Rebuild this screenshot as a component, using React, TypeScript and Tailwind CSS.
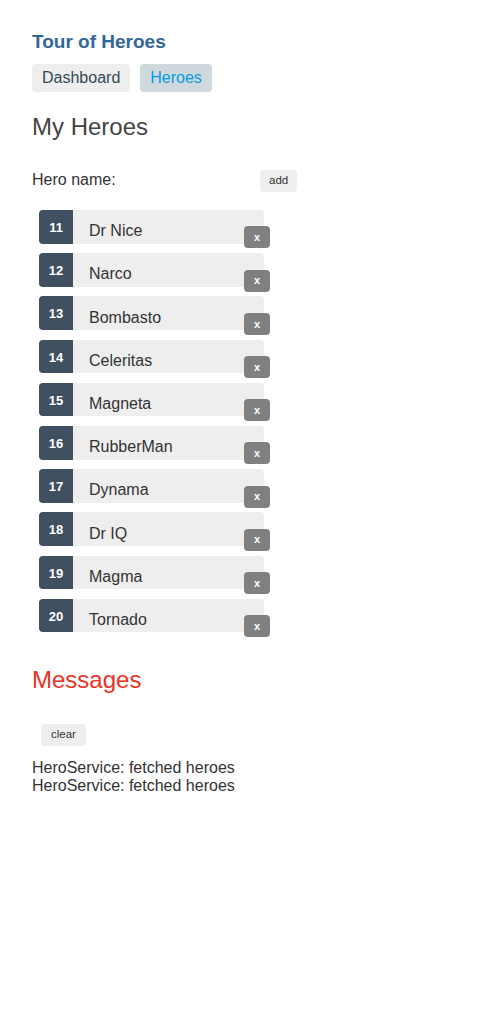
import React from 'react';

interface Hero {
  id: number;
  name: string;
}

const heroes: Hero[] = [
  { id: 11, name: 'Dr Nice' },
  { id: 12, name: 'Narco' },
  { id: 13, name: 'Bombasto' },
  { id: 14, name: 'Celeritas' },
  { id: 15, name: 'Magneta' },
  { id: 16, name: 'RubberMan' },
  { id: 17, name: 'Dynama' },
  { id: 18, name: 'Dr IQ' },
  { id: 19, name: 'Magma' },
  { id: 20, name: 'Tornado' },
];

const messages = ['HeroService: fetched heroes', 'HeroService: fetched heroes'];

const App: React.FC = () => {
  return (
    <div className="min-h-[1024px] bg-white px-[32px] pt-[31px] text-[#333] font-['Liberation_Sans',Arial,sans-serif]">
      <h1 className="text-[19px] leading-[22px] font-bold text-[#369]">Tour of Heroes</h1>

      {/* Nav */}
      <nav className="mt-[11px] flex gap-[10px]">
        <a className="rounded-[4px] bg-[#eee] px-[10px] py-[5px] text-[16px] leading-[18px] text-[#334953]">
          Dashboard
        </a>
        <a className="rounded-[4px] bg-[#cfd8dc] px-[10px] py-[5px] text-[16px] leading-[18px] text-[#039be5]">
          Heroes
        </a>
      </nav>

      <h2 className="mt-[21px] text-[24px] leading-[28px] text-[#444]">My Heroes</h2>

      {/* Add hero */}
      <div className="mt-[28px] flex items-start">
        <label className="mt-[2px] w-[88px] text-[16px] leading-[18px]">Hero name:</label>
        <input className="h-[18px] w-[140px] bg-transparent outline-none" />
        <button className="mt-[0.5px] h-[22px] rounded-[4px] bg-[#eee] px-[9px] text-[11.5px] text-[#333]">
          add
        </button>
      </div>

      {/* Hero list */}
      <ul className="ml-[7px] mt-[18.5px] flex flex-col gap-[9.6px]">
        {heroes.map((hero) => (
          <li key={hero.id} className="relative flex h-[33.6px] w-[225px] items-center rounded-[4px] bg-[#eee]">
            <span className="flex h-full w-[34px] items-center justify-center rounded-l-[4px] bg-[#405061] pt-[2px] text-[13px] font-bold text-white">
              {hero.id}
            </span>
            <span className="mt-[9px] pl-[16px] text-[16px] leading-[18px] text-[#333]">{hero.name}</span>
            <button className="absolute left-[205px] top-[16.4px] flex h-[22px] w-[26px] items-center justify-center rounded-[4px] bg-[#808080] text-[11px] font-bold text-white">
              x
            </button>
          </li>
        ))}
      </ul>

      {/* Messages */}
      <div className="mt-[34px]">
        <h2 className="text-[24px] leading-[28px] text-[#ea3323]">Messages</h2>
        <button className="ml-[9px] mt-[29.3px] block h-[22px] rounded-[4px] bg-[#eee] px-[10px] text-[11.5px] text-[#333]">
          clear
        </button>
        <div className="mt-[13.8px]">
          {messages.map((m, i) => (
            <div key={i} className="text-[16px] leading-[17.3px]">
              {m}
            </div>
          ))}
        </div>
      </div>
    </div>
  );
};

export default App;
